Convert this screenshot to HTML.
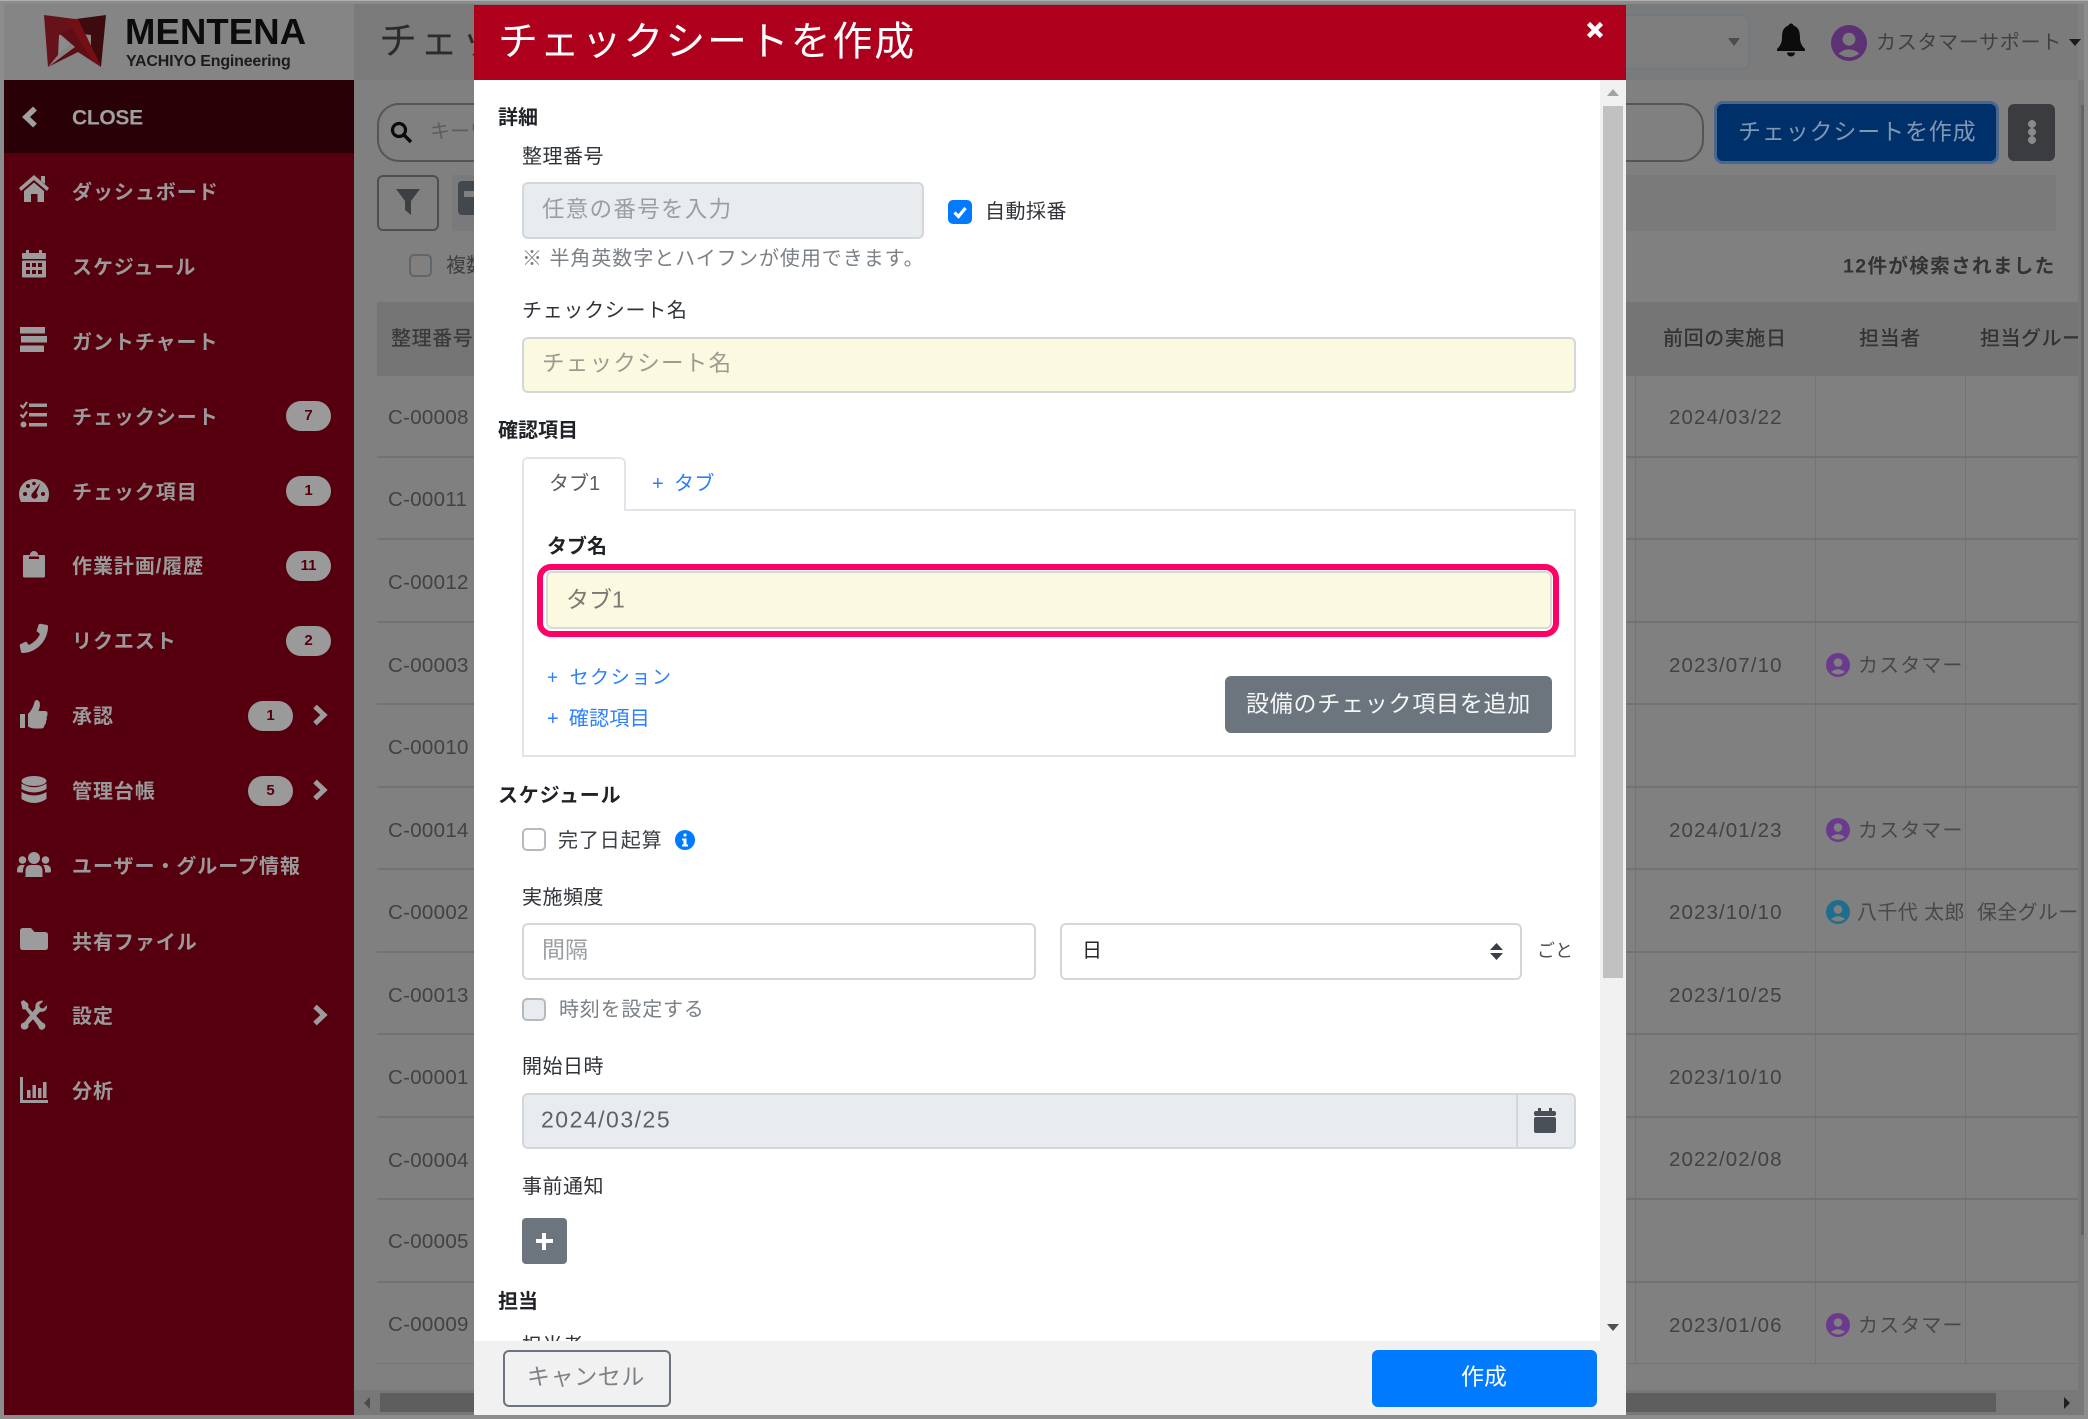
<!DOCTYPE html>
<html lang="ja"><head><meta charset="utf-8"><title>チェックシートを作成</title>
<style>
html,body{margin:0;padding:0;width:2088px;height:1419px;overflow:hidden;background:#8c8c8c;font-family:"Liberation Sans","Noto Sans CJK JP",sans-serif}
div,svg,span.a{position:absolute}
.t{position:absolute;white-space:nowrap;line-height:1;transform:translateY(calc(-50% + 1px));font-size:20px}
.m{font-weight:700;color:#9a9a9a;left:72px;letter-spacing:.95px}
.b{left:286px;width:45px;height:30px;border-radius:15px;background:#9a9a9a;color:#56000f;font-size:15px;font-weight:700;text-align:center;line-height:30px}
.c{left:388px;font-size:20.5px;color:#424242;letter-spacing:.3px}
.d{left:1669px;font-size:20.5px;color:#424242;letter-spacing:1.1px}
.h{height:2px;left:377px;width:1701px;background:#727272}
.v{width:1px;top:376px;height:988px;background:#747474}
.l{color:#2f3338;letter-spacing:.5px}
.s{color:#1f2226;font-weight:700;left:499px}
.i{box-sizing:border-box;border:2px solid #d3d6db;border-radius:6px}
.bl{color:#2a7fff;font-size:19px;letter-spacing:1.6px;word-spacing:3px}
</style></head><body>

<!-- base layout -->
<div style="left:0;top:0;width:2088px;height:1px;background:#b0b0b0"></div>
<div style="left:4px;top:4px;width:2080px;height:1411px;background:#808080"></div>
<div style="left:4px;top:4px;width:350px;height:76px;background:#858585"></div>
<div style="left:354px;top:4px;width:1724px;height:76px;background:#7b7b7b"></div>

<!-- logo -->
<svg style="left:40px;top:10px" width="75" height="62" viewBox="40 10 75 62">
<path d="M44 15 L75 19 L75 33 L59 35 L58 55 L48 67 Z" fill="#66121a"/>
<path d="M106 15 L76 19 L76 33 L91 35 L91 52 L101 67 Z" fill="#3d0a0e"/>
<path d="M59 35 L70 44 L59 54 Z" fill="#8c8c8c"/>
<path d="M90 36 L84 42 L90 50 Z" fill="#8c8c8c"/>
<path d="M48 67 L75 47 L60 34 L73 28 L101 67 L78 52 Z" fill="#5e0e14"/>
<path d="M66 19 L78 19 L101 66 L92 60 Z" fill="#730f15"/>
</svg>
<span class="t" style="left:125px;top:31px;font-size:36.5px;font-weight:700;color:#0c0c0c;letter-spacing:.1px">MENTENA</span>
<span class="t" style="left:126px;top:61px;font-size:16px;font-weight:700;color:#1c1c1c;letter-spacing:-.2px">YACHIYO Engineering</span>

<!-- sidebar -->
<div style="left:4px;top:80px;width:350px;height:1335px;background:#56000f"></div>
<div style="left:4px;top:80px;width:350px;height:73px;background:#2a0007"></div>
<svg style="left:20px;top:105px" width="20" height="24" viewBox="0 0 20 24"><polyline points="15,3.5 6,12 15,20.5" fill="none" stroke="#a0a0a0" stroke-width="5.5"/></svg>
<span class="t" style="left:72px;top:117px;font-size:21px;font-weight:700;color:#a0a0a0;letter-spacing:-.3px">CLOSE</span>

<svg style="left:18px;top:173px" width="32" height="32" viewBox="0 0 32 32" fill="#9c9c9c"><path d="M16 2 L31 15 L29 18 L16 7 L3 18 L1 15 Z"/><path d="M23 3h4v8l-4-3z"/><path d="M6 18 L16 9.500 L26 18 V29 H19.500 V21 H13 V29 H6 Z"/></svg>
<span class="t m" style="top:192px">ダッシュボード</span>

<svg style="left:18px;top:248px" width="32" height="32" viewBox="0 0 32 32" fill="#9c9c9c"><rect x="8" y="2" width="3" height="6"/><rect x="21" y="2" width="3" height="6"/><rect x="4" y="5" width="24" height="6" rx="1"/><rect x="4" y="12.500" width="24" height="17" rx="1"/><g fill="#56000f"><rect x="8" y="15" width="4" height="4"/><rect x="14" y="15" width="4" height="4"/><rect x="20" y="15" width="4" height="4"/><rect x="8" y="22" width="4" height="4"/><rect x="14" y="22" width="4" height="4"/><rect x="20" y="22" width="4" height="4"/></g></svg>
<span class="t m" style="top:267px">スケジュール</span>

<svg style="left:18px;top:325px" width="32" height="32" viewBox="0 0 32 32" fill="#9c9c9c"><rect x="2" y="2" width="25" height="6.500"/><rect x="3" y="11" width="26" height="6.500"/><rect x="2" y="20.500" width="24" height="6.500"/></svg>
<span class="t m" style="top:342px">ガントチャート</span>

<svg style="left:18px;top:399px" width="32" height="32" viewBox="0 0 32 32"><g fill="#9c9c9c"><rect x="11" y="4.500" width="18" height="3.500"/><rect x="11" y="14" width="18" height="3.500"/><rect x="11" y="24" width="18" height="3.500"/><circle cx="5.500" cy="25.500" r="3"/></g><g fill="none" stroke="#9c9c9c" stroke-width="2.200"><polyline points="2.500,6 5,8.500 9,3"/><polyline points="2.500,15.500 5,18 9,12.500"/></g></svg>
<span class="t m" style="top:417px">チェックシート</span>
<div class="b" style="top:401px">7</div>

<svg style="left:18px;top:475px" width="32" height="32" viewBox="0 0 32 32"><path d="M16 4 A15 15 0 0 1 31 19 Q31 23 29 27 H3 Q1 23 1 19 A15 15 0 0 1 16 4Z" fill="#9c9c9c"/><g fill="#56000f"><circle cx="7" cy="19" r="2"/><circle cx="10" cy="11" r="2"/><circle cx="25" cy="19" r="2"/><circle cx="16" cy="8.500" r="1.800"/></g><path d="M22.500 8 L18.500 18 A3.200 3.200 0 1 1 14.500 18" fill="#56000f"/></svg>
<span class="t m" style="top:492px">チェック項目</span>
<div class="b" style="top:476px">1</div>

<svg style="left:18px;top:549px" width="32" height="32" viewBox="0 0 32 32" fill="#9c9c9c"><path d="M6 6 H12 A4 4 0 0 1 20 6 H26 Q27 6 27 7.500 V27 Q27 28.500 25.500 28.500 H6.500 Q5 28.500 5 27 V7.500 Q5 6 6 6Z"/><rect x="11" y="7.500" width="10" height="2.500" fill="#56000f"/></svg>
<span class="t m" style="top:566px">作業計画/履歴</span>
<div class="b" style="top:551px">11</div>

<svg style="left:18px;top:623px" width="32" height="32" viewBox="0 0 32 32" fill="#9c9c9c"><path d="M29 2 L22.500 0.800 Q21 0.800 20.500 2 L18.500 8 L22 11 Q19 18 11 22 L8 18.500 L2.800 21 Q1.500 21.500 1.800 23 L3 29 Q3.300 30 4.500 30 C18 30 30 18 30 3.500 Q30 2.300 29 2Z"/></svg>
<span class="t m" style="top:641px">リクエスト</span>
<div class="b" style="top:626px">2</div>

<svg style="left:18px;top:699px" width="32" height="32" viewBox="0 0 32 32" fill="#9c9c9c"><path d="M2 15 H7 V29 H2 Z"/><path d="M10 15 Q15 10 16.500 3 Q17 1 19 1 Q23 2 21.500 9 L20.500 12 H27 Q30 12 29.500 15 Q29.500 17 28.500 18 Q29.500 20 28 22 Q28.500 24.500 26.500 26 Q26.500 29.500 23 29.500 H17 Q13 29.500 10 27.500 Z"/></svg>
<span class="t m" style="top:716px">承認</span>
<div class="b" style="top:701px;left:248px">1</div>
<svg style="left:310px;top:703px" width="20" height="24" viewBox="0 0 20 24"><polyline points="5,3.500 14,12 5,20.500" fill="none" stroke="#9c9c9c" stroke-width="5"/></svg>

<svg style="left:18px;top:774px" width="32" height="32" viewBox="0 0 32 32" fill="#9c9c9c"><ellipse cx="16" cy="7" rx="12.500" ry="5"/><path d="M3.500 9.500 Q16 17 28.500 9.500 V15 Q16 22 3.500 15Z"/><path d="M3.500 18 Q16 25 28.500 18 V25 Q16 33 3.500 25Z"/></svg>
<span class="t m" style="top:791px">管理台帳</span>
<div class="b" style="top:776px;left:248px">5</div>
<svg style="left:310px;top:778px" width="20" height="24" viewBox="0 0 20 24"><polyline points="5,3.500 14,12 5,20.500" fill="none" stroke="#9c9c9c" stroke-width="5"/></svg>

<svg style="left:16px;top:848px" width="36" height="32" viewBox="0 0 36 32" fill="#9c9c9c"><circle cx="18" cy="10" r="6"/><circle cx="6.500" cy="12" r="3.800"/><circle cx="29.500" cy="12" r="3.800"/><path d="M9.500 29 V23 Q9.500 17 15 17 H21 Q26.500 17 26.500 23 V29 Z"/><path d="M1 23 Q1 17 6 17 H9 Q7.500 18.500 7 22 V24.500 H2.500 Q1 24.500 1 23Z"/><path d="M35 23 Q35 17 30 17 H27 Q28.500 18.500 29 22 V24.500 H33.500 Q35 24.500 35 23Z"/></svg>
<span class="t m" style="top:866px">ユーザー・グループ情報</span>

<svg style="left:18px;top:924px" width="32" height="32" viewBox="0 0 32 32" fill="#9c9c9c"><path d="M2 7 Q2 4 5 4 H13 L16.500 8 H27 Q30 8 30 11 V23 Q30 26 27 26 H5 Q2 26 2 23 Z"/></svg>
<span class="t m" style="top:942px">共有ファイル</span>

<svg style="left:18px;top:999px" width="30" height="32" viewBox="0 0 32 34" fill="#9c9c9c"><path d="M3 3 L6 1 L11 5 V9 L26 25 Q30 26 29 30 Q27 34 23 32 L21 28 L8 11 H5 Z"/><path d="M27 2 L22.500 6.500 L24 9.500 L27 10 L31 6.500 Q31.500 11 28 13 Q25.500 14 23.500 13.500 L11 27 Q12 31 8 32.500 Q3 33 3 28.500 Q3 25.500 6.500 25 L18.500 10 Q18 5 21 3 Q24 1 27 2Z"/></svg>
<span class="t m" style="top:1016px">設定</span>
<svg style="left:310px;top:1003px" width="20" height="24" viewBox="0 0 20 24"><polyline points="5,3.500 14,12 5,20.500" fill="none" stroke="#9c9c9c" stroke-width="5"/></svg>

<svg style="left:18px;top:1074px" width="32" height="32" viewBox="0 0 32 32" fill="#9c9c9c"><path d="M2 3 H5 V26 H30 V29 H2Z"/><rect x="9" y="16" width="3.500" height="8"/><rect x="14.500" y="11" width="3.500" height="13"/><rect x="20" y="14" width="3.500" height="10"/><rect x="25" y="8" width="3.500" height="16"/></svg>
<span class="t m" style="top:1091px">分析</span>

<!-- header behind -->
<span class="t" style="left:379px;top:41px;font-size:38px;color:#2b2b2b;letter-spacing:3px">チェック</span>
<div style="left:1300px;top:14px;width:450px;height:56px;box-sizing:border-box;border:2px solid #707a80;border-radius:7px;background:#7d7d7d"></div>
<svg style="left:1727px;top:37px" width="14" height="10" viewBox="0 0 14 10"><path d="M1 1 H13 L7 9Z" fill="#4c4c4c"/></svg>
<svg style="left:1775px;top:22px" width="32" height="36" viewBox="0 0 32 36" fill="#0c0c0c"><circle cx="16" cy="4" r="2.500"/><path d="M16 3 C24 4 25 10 25 16 C25 21 27 24 30 27 V29 H2 V27 C5 24 7 21 7 16 C7 10 8 4 16 3Z"/><path d="M12 30.500 H20 A4 4 0 0 1 12 30.500Z"/></svg>
<svg style="left:1831px;top:25px" width="36" height="36" viewBox="0 0 24 24"><circle cx="12" cy="12" r="12" fill="#5c3275"/><circle cx="12" cy="9.500" r="4.300" fill="#7b7b7b"/><path d="M5 19 Q12 13.500 19 19 Q12 24 5 19Z" fill="#7b7b7b"/></svg>
<span class="t" style="left:1876px;top:42px;font-size:20px;color:#404040;letter-spacing:.7px">カスタマーサポート</span>
<svg style="left:2068px;top:38px" width="14" height="9" viewBox="0 0 14 9"><path d="M1 1 H13 L7 8Z" fill="#1a1a1a"/></svg>

<!-- toolbar behind -->
<div style="left:377px;top:103px;width:1327px;height:59px;box-sizing:border-box;border:2px solid #555;border-radius:22px"></div>
<svg style="left:390px;top:121px" width="23" height="23" viewBox="0 0 23 23"><circle cx="9" cy="9" r="6.500" fill="none" stroke="#0a0a0a" stroke-width="3.200"/><line x1="14" y1="14" x2="21" y2="21" stroke="#0a0a0a" stroke-width="3.400"/></svg>
<span class="t" style="left:430px;top:131px;font-size:20px;color:#5e5e5e">キーワード</span>
<div style="left:1717px;top:104px;width:279px;height:57px;background:#00306a;border-radius:6px;box-shadow:0 0 0 3px #49668f"></div>
<span class="t" style="left:1738px;top:131px;font-size:23px;color:#8097b4;letter-spacing:.85px">チェックシートを作成</span>
<div style="left:2008px;top:104px;width:47px;height:57px;background:#3a3c3f;border-radius:6px"></div>
<div style="left:2028px;top:120px;width:8px;height:24px;background:radial-gradient(circle at 4px 4px,#8b8b8b 3.800px,transparent 4px),radial-gradient(circle at 4px 12px,#8b8b8b 3.800px,transparent 4px),radial-gradient(circle at 4px 20px,#8b8b8b 3.800px,transparent 4px)"></div>
<div style="left:452px;top:175px;width:1604px;height:56px;background:#7a7a7a"></div>
<div style="left:377px;top:175px;width:62px;height:56px;box-sizing:border-box;border:2px solid #4f4f4f;border-radius:6px;background:#808080"></div>
<svg style="left:395px;top:188px" width="26" height="28" viewBox="0 0 26 28"><path d="M1 1 H25 L16 13 V27 L10 22 V13Z" fill="#3c4044"/></svg>
<div style="left:458px;top:181px;width:20px;height:34px;background:#43484f;border-radius:4px 0 0 4px"></div>
<div style="left:464px;top:191px;width:10px;height:6px;background:#808080"></div>
<div style="left:409px;top:254px;width:23px;height:23px;box-sizing:border-box;border:2px solid #5f666c;border-radius:5px"></div>
<span class="t" style="left:446px;top:265px;font-size:20px;color:#3e3e3e">複数</span>
<span class="t" style="left:1843px;top:266px;font-size:19.500px;font-weight:700;color:#333;letter-spacing:1.4px">12件が検索されました</span>

<!-- table -->
<div style="left:377px;top:302px;width:1701px;height:74px;background:#757575"></div>
<span class="t" style="left:391px;top:338px;font-size:20px;font-weight:500;color:#3a3a3a;letter-spacing:.6px">整理番号</span>
<span class="t" style="left:1663px;top:338px;font-size:20px;color:#333;letter-spacing:.6px;font-weight:500">前回の実施日</span>
<span class="t" style="left:1859px;top:338px;font-size:20px;color:#333;letter-spacing:.6px;font-weight:500">担当者</span>
<div style="left:1980px;top:322px;width:98px;height:32px;overflow:hidden"><span class="t" style="left:0;top:16px;font-size:20px;color:#333;letter-spacing:.5px;font-weight:500">担当グループ</span></div>
<div class="v" style="left:1635px"></div><div class="v" style="left:1815px"></div><div class="v" style="left:1965px"></div>
<div class="h" style="top:456px"></div><div class="h" style="top:538px"></div><div class="h" style="top:621px"></div><div class="h" style="top:703px"></div><div class="h" style="top:786px"></div><div class="h" style="top:868px"></div><div class="h" style="top:951px"></div><div class="h" style="top:1033px"></div><div class="h" style="top:1116px"></div><div class="h" style="top:1198px"></div><div class="h" style="top:1281px"></div><div class="h" style="top:1363px;height:1px;background:#757575"></div>

<span class="t c" style="top:417px">C-00008</span><span class="t c" style="top:499px">C-00011</span><span class="t c" style="top:582px">C-00012</span><span class="t c" style="top:665px">C-00003</span><span class="t c" style="top:747px">C-00010</span><span class="t c" style="top:830px">C-00014</span><span class="t c" style="top:912px">C-00002</span><span class="t c" style="top:995px">C-00013</span><span class="t c" style="top:1077px">C-00001</span><span class="t c" style="top:1160px">C-00004</span><span class="t c" style="top:1241px">C-00005</span><span class="t c" style="top:1324px">C-00009</span>

<span class="t d" style="top:417px">2024/03/22</span><span class="t d" style="top:665px">2023/07/10</span><span class="t d" style="top:830px">2024/01/23</span><span class="t d" style="top:912px">2023/10/10</span><span class="t d" style="top:995px">2023/10/25</span><span class="t d" style="top:1077px">2023/10/10</span><span class="t d" style="top:1159px">2022/02/08</span><span class="t d" style="top:1325px">2023/01/06</span>

<svg style="left:1826px;top:653px" width="24" height="24" viewBox="0 0 24 24"><circle cx="12" cy="12" r="12" fill="#6b3a8f"/><circle cx="12" cy="9.500" r="4.300" fill="#808080"/><path d="M5 19 Q12 13.500 19 19 Q12 24 5 19Z" fill="#808080"/></svg>
<div style="left:1858px;top:650px;width:106px;height:30px;overflow:hidden"><span class="t" style="left:0;top:15px;color:#484848;letter-spacing:1.1px">カスタマーサポート</span></div>
<svg style="left:1826px;top:818px" width="24" height="24" viewBox="0 0 24 24"><circle cx="12" cy="12" r="12" fill="#6b3a8f"/><circle cx="12" cy="9.500" r="4.300" fill="#808080"/><path d="M5 19 Q12 13.500 19 19 Q12 24 5 19Z" fill="#808080"/></svg>
<div style="left:1858px;top:815px;width:106px;height:30px;overflow:hidden"><span class="t" style="left:0;top:15px;color:#484848;letter-spacing:1.1px">カスタマーサポート</span></div>
<svg style="left:1826px;top:900px" width="24" height="24" viewBox="0 0 24 24"><circle cx="12" cy="12" r="12" fill="#1f6e8e"/><circle cx="12" cy="9.500" r="4.300" fill="#808080"/><path d="M5 19 Q12 13.500 19 19 Q12 24 5 19Z" fill="#808080"/></svg>
<div style="left:1857px;top:897px;width:106px;height:30px;overflow:hidden"><span class="t" style="left:0;top:15px;color:#484848;letter-spacing:.4px">八千代 太郎</span></div>
<div style="left:1977px;top:897px;width:101px;height:30px;overflow:hidden"><span class="t" style="left:0;top:15px;color:#484848;letter-spacing:.3px">保全グループ</span></div>
<svg style="left:1826px;top:1313px" width="24" height="24" viewBox="0 0 24 24"><circle cx="12" cy="12" r="12" fill="#6b3a8f"/><circle cx="12" cy="9.500" r="4.300" fill="#808080"/><path d="M5 19 Q12 13.500 19 19 Q12 24 5 19Z" fill="#808080"/></svg>
<div style="left:1858px;top:1310px;width:106px;height:30px;overflow:hidden"><span class="t" style="left:0;top:15px;color:#484848;letter-spacing:1.1px">カスタマーサポート</span></div>

<!-- page scrollbars -->
<div style="left:354px;top:1390px;width:1727px;height:25px;background:#787878"></div>
<div style="left:380px;top:1393px;width:1616px;height:19px;background:#5e5e5e"></div>
<svg style="left:362px;top:1396px" width="10" height="14" viewBox="0 0 10 14"><path d="M8 1 V13 L2 7Z" fill="#4c4c4c"/></svg>
<svg style="left:2062px;top:1396px" width="10" height="14" viewBox="0 0 10 14"><path d="M2 1 V13 L8 7Z" fill="#202020"/></svg>
<div style="left:2078px;top:80px;width:6px;height:1335px;background:#787878"></div>
<div style="left:2081px;top:105px;width:3px;height:1130px;background:#646464"></div>

<!-- modal -->
<div style="left:474px;top:5px;width:1152px;height:1410px;background:#fff"></div>
<div style="left:474px;top:5px;width:1152px;height:75px;background:#ae001c"></div>
<span class="t" style="left:498px;top:41px;font-size:40px;color:#fff;letter-spacing:1.800px">チェックシートを作成</span>
<svg style="left:1586px;top:21px" width="18" height="18" viewBox="0 0 18 18"><path d="M2.500 2.500 L15.500 15.500 M15.500 2.500 L2.500 15.500" stroke="#fff" stroke-width="4.500"/></svg>

<!-- modal scrollbar -->
<div style="left:1600px;top:80px;width:26px;height:1335px;background:#f1f1f1"></div>
<div style="left:1603px;top:106px;width:20px;height:872px;background:#c1c1c1"></div>
<svg style="left:1606px;top:88px" width="14" height="9" viewBox="0 0 14 9"><path d="M7 1 L13 8 H1Z" fill="#a3a3a3"/></svg>
<svg style="left:1606px;top:1323px" width="14" height="9" viewBox="0 0 14 9"><path d="M1 1 H13 L7 8Z" fill="#505050"/></svg>

<span class="t s" style="top:117px;left:498px">詳細</span>
<span class="t l" style="left:522px;top:156px">整理番号</span>
<div class="i" style="left:522px;top:182px;width:402px;height:57px;background:#e9ecef"></div>
<span class="t" style="left:542px;top:209px;font-size:22.500px;color:#9a9ea3;letter-spacing:1.3px">任意の番号を入力</span>
<div style="left:948px;top:200px;width:24px;height:24px;border-radius:5px;background:#007bff"></div>
<svg style="left:948px;top:200px" width="24" height="24" viewBox="0 0 24 24"><polyline points="6.500,12.500 10.500,16.500 17.500,8" fill="none" stroke="#fff" stroke-width="3.200"/></svg>
<span class="t l" style="left:985px;top:211px">自動採番</span>
<span class="t" style="left:522px;top:258px;color:#7a8087;letter-spacing:.95px">※ 半角英数字とハイフンが使用できます。</span>
<span class="t l" style="left:522px;top:310px;letter-spacing:.7px">チェックシート名</span>
<div class="i" style="left:522px;top:337px;width:1054px;height:56px;background:#fbf9df"></div>
<span class="t" style="left:542px;top:363px;font-size:22.500px;color:#9b9b92;letter-spacing:1.3px">チェックシート名</span>

<span class="t s" style="top:430px;left:498px">確認項目</span>
<div style="left:522px;top:509px;width:1054px;height:248px;box-sizing:border-box;border:2px solid #e1e5ea"></div>
<div style="left:522px;top:457px;width:104px;height:54px;box-sizing:border-box;border:2px solid #e1e5ea;border-bottom:0;border-radius:6px 6px 0 0;background:#fff"></div>
<span class="t" style="left:549px;top:483px;color:#5a6066">タブ1</span>
<span class="t bl" style="left:652px;top:483px;font-size:20px;letter-spacing:.4px;word-spacing:4px">+ タブ</span>
<span class="t" style="left:547px;top:546px;font-weight:700;color:#1f2226">タブ名</span>
<div style="left:537px;top:564px;width:1022px;height:73px;box-sizing:border-box;border:6px solid #ff0066;border-radius:14px"></div>
<div class="i" style="left:546px;top:571px;width:1006px;height:58px;background:#fbf9df;border-color:#d9d9d6"></div>
<span class="t" style="left:566px;top:599px;font-size:23px;color:#7a7a74">タブ1</span>
<span class="t bl" style="left:547px;top:677px">+ セクション</span>
<span class="t bl" style="left:547px;top:718px;font-size:20px;letter-spacing:.3px;word-spacing:4px">+ 確認項目</span>
<div style="left:1225px;top:676px;width:327px;height:57px;background:#6c757d;border-radius:6px"></div>
<span class="t" style="left:1246px;top:703px;font-size:23px;color:#f4f6f8;letter-spacing:.75px">設備のチェック項目を追加</span>

<span class="t s" style="top:795px;left:498px;letter-spacing:.8px">スケジュール</span>
<div style="left:522px;top:828px;width:24px;height:23px;box-sizing:border-box;border:2px solid #b4bac0;border-radius:5px;background:#fff"></div>
<span class="t" style="left:558px;top:840px;color:#3c4046;letter-spacing:.9px">完了日起算</span>
<svg style="left:675px;top:830px" width="20" height="20" viewBox="0 0 20 20"><circle cx="10" cy="10" r="10" fill="#007bff"/><rect x="8.500" y="3.500" width="3" height="3" rx="1" fill="#fff"/><path d="M7 8.500 H11.500 V14.500 H13 V16.500 H7 V14.500 H8.500 V10.500 H7Z" fill="#fff"/></svg>
<span class="t l" style="left:522px;top:897px">実施頻度</span>
<div class="i" style="left:522px;top:923px;width:514px;height:57px;background:#fff"></div>
<span class="t" style="left:542px;top:949px;font-size:23px;color:#9a9ea3">間隔</span>
<div class="i" style="left:1060px;top:923px;width:462px;height:57px;background:#fff"></div>
<span class="t" style="left:1082px;top:950px;color:#25282c">日</span>
<svg style="left:1490px;top:943px" width="13" height="17" viewBox="0 0 13 17"><path d="M6.500 0 L13 7 H0Z M0 10 H13 L6.500 17Z" fill="#3a3f45"/></svg>
<span class="t" style="left:1537px;top:950px;font-size:18px;color:#4a4f55">ごと</span>
<div style="left:522px;top:998px;width:24px;height:23px;box-sizing:border-box;border:2px solid #b4bac0;border-radius:5px;background:#e9ecef"></div>
<span class="t" style="left:559px;top:1009px;color:#7a8087;letter-spacing:.8px">時刻を設定する</span>
<span class="t l" style="left:522px;top:1066px">開始日時</span>
<div class="i" style="left:522px;top:1093px;width:1054px;height:56px;background:#e9ecef"></div>
<div style="left:1516px;top:1094px;width:2px;height:54px;background:#d3d6db"></div>
<span class="t" style="left:541px;top:1119px;font-size:23px;color:#5c6268;letter-spacing:1.5px">2024/03/25</span>
<svg style="left:1534px;top:1108px" width="22" height="25" viewBox="0 0 22 25" fill="#495057"><rect x="4" y="0" width="3" height="5"/><rect x="15" y="0" width="3" height="5"/><rect x="0" y="3" width="22" height="5" rx="2"/><rect x="0" y="9" width="22" height="16" rx="2"/></svg>
<span class="t l" style="left:522px;top:1186px">事前通知</span>
<div style="left:522px;top:1218px;width:45px;height:46px;background:#6c757d;border-radius:4px"></div>
<div style="left:536px;top:1239px;width:17px;height:4px;background:#fff"></div>
<div style="left:542px;top:1233px;width:4px;height:17px;background:#fff"></div>
<span class="t s" style="top:1301px;left:498px">担当</span>
<span class="t l" style="left:522px;top:1345px">担当者</span>

<div style="left:474px;top:1341px;width:1126px;height:74px;background:#f1f1f1"></div>
<div style="left:503px;top:1350px;width:168px;height:57px;box-sizing:border-box;border:2px solid #6c757d;border-radius:6px"></div>
<span class="t" style="left:527px;top:1376px;font-size:23px;color:#7c8288;letter-spacing:.6px">キャンセル</span>
<div style="left:1372px;top:1350px;width:225px;height:57px;background:#007bff;border-radius:6px"></div>
<span class="t" style="left:1461px;top:1376px;font-size:23px;color:#fff">作成</span>

</body></html>
